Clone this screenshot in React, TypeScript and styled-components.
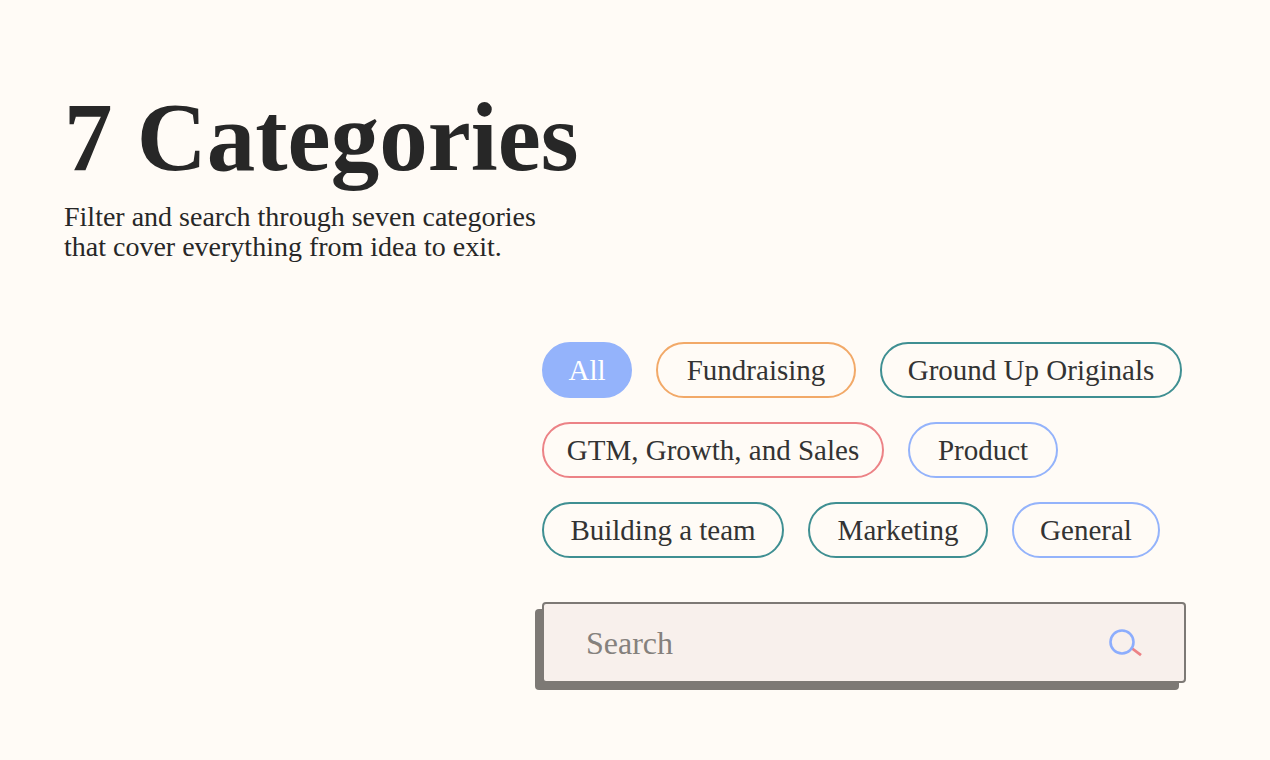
import React, { useState } from "react";
import styled, { createGlobalStyle } from "styled-components";

const GlobalStyle = createGlobalStyle`
  *, *::before, *::after { box-sizing: border-box; }
  body {
    margin: 0;
    background: #fffbf6;
    color: #272727;
    font-family: "Liberation Serif", serif;
  }
`;

const Page = styled.main`
  padding: 82px 84px 70px 64px;
`;

const Title = styled.h1`
  margin: 0;
  font-size: 97px;
  line-height: 112px;
  font-weight: 700;
`;

const Intro = styled.p`
  margin: 8px 0 0;
  max-width: 500px;
  font-size: 28px;
  line-height: 30px;
`;

const Filters = styled.section`
  width: 100%;
  max-width: 644px;
  margin: 80px 0 0 auto;
`;

const PillList = styled.div`
  display: flex;
  flex-wrap: wrap;
  gap: 24px;
`;

const Pill = styled.button<{ $color: string; $active: boolean; $minWidth: number }>`
  min-width: ${(p) => p.$minWidth}px;
  height: 56px;
  padding: 0 20px;
  border: 2px solid ${(p) => p.$color};
  border-radius: 28px;
  background: ${(p) => (p.$active ? p.$color : "transparent")};
  color: ${(p) => (p.$active ? "#ffffff" : "#333333")};
  font: 500 29px/32px "Liberation Serif", serif;
  cursor: pointer;
`;

const SearchBox = styled.form`
  display: flex;
  align-items: center;
  height: 81px;
  margin-top: 44px;
  padding: 0 42px;
  border: 2px solid #7d7975;
  border-radius: 4px;
  background: #f8f0ec;
  box-shadow: -7px 7px 0 #7d7975;
`;

const SearchInput = styled.input`
  flex: 1;
  min-width: 0;
  padding: 0;
  border: 0;
  outline: 0;
  background: transparent;
  color: #333333;
  font: 400 32px/40px "Liberation Serif", serif;

  &::placeholder {
    color: #85817d;
    opacity: 1;
  }
`;

const SearchButton = styled.button`
  display: flex;
  padding: 0;
  border: 0;
  background: transparent;
  cursor: pointer;
`;

const BLUE = "#94b3fb";
const TEAL = "#3f8f92";

const categories = [
  { name: "All", color: BLUE, minWidth: 90 },
  { name: "Fundraising", color: "#f2a968", minWidth: 200 },
  { name: "Ground Up Originals", color: TEAL, minWidth: 302 },
  { name: "GTM, Growth, and Sales", color: "#ec8286", minWidth: 342 },
  { name: "Product", color: BLUE, minWidth: 150 },
  { name: "Building a team", color: TEAL, minWidth: 242 },
  { name: "Marketing", color: TEAL, minWidth: 180 },
  { name: "General", color: BLUE, minWidth: 148 },
];

export default function App() {
  const [selected, setSelected] = useState("All");

  return (
    <>
      <GlobalStyle />
      <Page>
        <Title>7 Categories</Title>
        <Intro>
          Filter and search through seven categories that cover everything from
          idea to exit.
        </Intro>
        <Filters aria-label="Category filters">
          <PillList>
            {categories.map(({ name, color, minWidth }) => (
              <Pill
                key={name}
                type="button"
                $color={color}
                $active={name === selected}
                $minWidth={minWidth}
                aria-pressed={name === selected}
                onClick={() => setSelected(name)}
              >
                {name}
              </Pill>
            ))}
          </PillList>
          <SearchBox role="search" onSubmit={(e) => e.preventDefault()}>
            <SearchInput type="text" placeholder="Search" aria-label="Search" />
            <SearchButton type="submit" aria-label="Submit search">
              <svg width="34" height="30" viewBox="0 0 34 30" fill="none">
                <path d="M23.5 20 L33 27.2" stroke="#ec8286" strokeWidth="2.8" />
                <circle cx="14" cy="14" r="11.5" stroke="#8cadfd" strokeWidth="2.6" />
              </svg>
            </SearchButton>
          </SearchBox>
        </Filters>
      </Page>
    </>
  );
}
